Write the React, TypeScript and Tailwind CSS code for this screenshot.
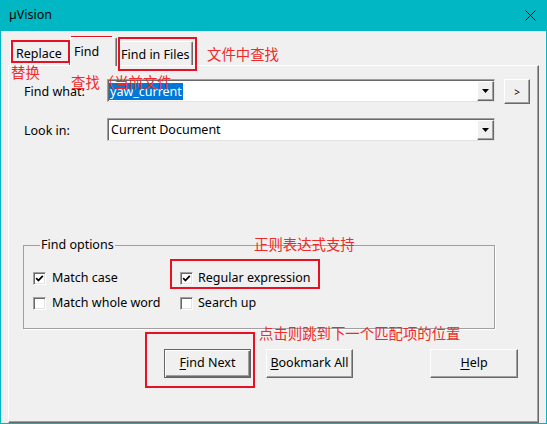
import React from "react";

function Check({ checked }: { checked?: boolean }) {
  return (
    <span className="w-[13px] h-[13px] shrink-0 bg-white border border-t-[#a0a0a0] border-l-[#a0a0a0] border-r-white border-b-white shadow-[inset_1px_1px_0_#696969,inset_-1px_-1px_0_#e3e3e3] flex items-center justify-center">
      {checked && (
        <svg width="9" height="9" viewBox="0 0 9 9">
          <path d="M1.2 4.2 L3.4 6.5 L7.8 1.8" stroke="#000" strokeWidth="1.8" fill="none" />
        </svg>
      )}
    </span>
  );
}

function Combo({ children }: { children: React.ReactNode }) {
  return (
    <div className="w-[388px] h-[23px] bg-white border border-t-[#a0a0a0] border-l-[#a0a0a0] border-r-[#e3e3e3] border-b-[#e3e3e3] shadow-[inset_1px_1px_0_#696969] flex items-stretch">
      <div className="flex-1 flex items-center pl-[2px] pt-px">{children}</div>
      <div className="w-[17px] mt-px bg-[#f0f0f0] border-t border-l border-t-white border-l-white border-r border-b border-r-[#696969] border-b-[#696969] shadow-[inset_-1px_-1px_0_#a0a0a0] flex items-center justify-center">
        <svg width="7" height="4" viewBox="0 0 7 4">
          <path d="M0 0 H7 L3.5 4 Z" fill="#000" />
        </svg>
      </div>
    </div>
  );
}

function Btn({ children, def }: { children: React.ReactNode; def?: boolean }) {
  return (
    <div
      className={
        "h-[29px] flex items-center justify-center bg-[#f0f0f0] " +
        (def
          ? "border border-[#646464] shadow-[inset_1px_1px_0_#ffffff,inset_-1px_-1px_0_#696969,inset_-2px_-2px_0_#a0a0a0]"
          : "border border-t-white border-l-white border-r-[#696969] border-b-[#696969] shadow-[inset_-1px_-1px_0_#a0a0a0]")
      }
    >
      <span className="text-[12.5px] leading-none">{children}</span>
    </div>
  );
}

export default function App() {
  return (
    <div className="relative w-[547px] h-[424px] bg-[#00b7c3] flex flex-col px-px pb-px font-['Noto_Sans',sans-serif] text-[12.5px] text-black overflow-hidden">
      {/* Title bar */}
      <div className="h-[31px] shrink-0 flex items-center justify-between pl-[8px] pr-[10px]">
        <span className="leading-none text-[12.5px]">µVision</span>
        <svg width="11" height="11" viewBox="0 0 11 11">
          <path d="M0.5 0.5 L10.5 10.5 M10.5 0.5 L0.5 10.5" stroke="#000" strokeWidth="1" />
        </svg>
      </div>

      {/* Client */}
      <div className="flex-1 bg-[#f0f0f0] flex flex-col pl-[7px] pr-[7px]">
        {/* Tabs */}
        <div className="h-[34px] shrink-0 flex items-end pl-[2px]">
          <div className="w-[60px] h-[24px] border-t border-l border-t-white border-l-white border-r border-r-[#696969] rounded-t-[2px] pl-[5px] pt-[4px] leading-[16px]">
            Replace
          </div>
          <div className="relative z-10 -mb-px w-[47px] h-[29px] bg-[#f0f0f0] border-t border-l border-t-white border-l-white border-r border-r-[#696969] shadow-[inset_-1px_0_0_#a0a0a0] rounded-t-[2px] pl-[3px] pt-[6px] leading-[16px]">
            Find
          </div>
          <div className="w-[76px] h-[24px] border-t border-t-white border-r border-r-[#696969] shadow-[inset_-1px_0_0_#a0a0a0] rounded-t-[2px] pl-[4px] pt-[5px] leading-[16px]">
            Find in Files
          </div>
        </div>

        {/* Panel */}
        <div className="flex-1 border-t border-l border-t-white border-l-white border-r border-b border-r-[#696969] border-b-[#696969] shadow-[inset_-1px_-1px_0_#a0a0a0] flex flex-col pl-[15px]">
          {/* Find what */}
          <div className="mt-[13px] flex items-start">
            <div className="w-[83px] h-[23px] flex items-center pt-[3px]">Find what:</div>
            <Combo>
              <span className="bg-[#0078d7] text-white h-[17px] leading-[17px] pl-px pr-[1px] -ml-px">yaw_current</span>
            </Combo>
            <div className="ml-[9px] w-[26px] h-[25px] bg-[#f0f0f0] border border-t-white border-l-white border-r-[#696969] border-b-[#696969] shadow-[inset_-1px_-1px_0_#a0a0a0] flex items-center justify-center">
              <span className="text-[10px] leading-none">&gt;</span>
            </div>
          </div>

          {/* Look in */}
          <div className="mt-[14px] flex items-start">
            <div className="w-[83px] h-[23px] flex items-center pt-[4px]">Look in:</div>
            <Combo>
              <span className="pl-px">Current Document</span>
            </Combo>
          </div>

          {/* Find options */}
          <fieldset className="mt-[96px] -ml-px w-[472px] border border-[#a0a0a0] shadow-[1px_1px_0_#ffffff] pb-[17px] pl-[9px]">
            <legend className="ml-[7px] px-px leading-[16px]">Find options</legend>
            <div className="mt-[17px] h-[16px] flex items-center">
              <div className="w-[147px] flex items-center gap-[6px]">
                <Check checked />
                <span>Match case</span>
              </div>
              <div className="flex items-center gap-[5px]">
                <Check checked />
                <span>Regular expression</span>
              </div>
            </div>
            <div className="mt-[9px] h-[16px] flex items-center">
              <div className="w-[147px] flex items-center gap-[6px]">
                <Check />
                <span>Match whole word</span>
              </div>
              <div className="flex items-center gap-[5px]">
                <Check />
                <span>Search up</span>
              </div>
            </div>
          </fieldset>

          {/* Buttons */}
          <div className="mt-[20px] ml-[140px] flex items-start">
            <div className="w-[87px]">
              <Btn def>
                <span className="underline underline-offset-2">F</span>ind Next
              </Btn>
            </div>
            <div className="w-[87px] ml-[15px]">
              <Btn>
                <span className="underline underline-offset-2">B</span>ookmark All
              </Btn>
            </div>
            <div className="w-[88px] ml-[77px]">
              <Btn>
                <span className="underline underline-offset-2">H</span>elp
              </Btn>
            </div>
          </div>
        </div>
      </div>

      {/* Annotations (overlay) */}
      <div className="absolute left-[11px] top-[40px] w-[59px] h-[23px] border-2 border-[#e81123] pointer-events-none" />
      <div className="absolute left-[71px] top-[36px] w-[41px] h-[30px] border-2 border-[#e81123] pointer-events-none" />
      <div className="absolute left-[118px] top-[37px] w-[79px] h-[34px] border-2 border-[#e81123] pointer-events-none" />
      <div className="absolute left-[170px] top-[259px] w-[150px] h-[30px] border-2 border-[#e81123] pointer-events-none" />
      <div className="absolute left-[145px] top-[332px] w-[110px] h-[56px] border-2 border-[#e81123] pointer-events-none" />

      <div className="absolute left-[11px] top-[65px] text-[14.4px] leading-none text-[#ee2a2a] font-['Noto_Sans_CJK_SC',sans-serif] whitespace-nowrap">替换</div>
      <div className="absolute left-[71px] top-[75px] text-[14.4px] leading-none text-[#ee2a2a] font-['Noto_Sans_CJK_SC',sans-serif] whitespace-nowrap">查找（当前文件</div>
      <div className="absolute left-[207px] top-[47px] text-[14.4px] leading-none text-[#ee2a2a] font-['Noto_Sans_CJK_SC',sans-serif] whitespace-nowrap">文件中查找</div>
      <div className="absolute left-[254px] top-[237px] text-[14.4px] leading-none text-[#ee2a2a] font-['Noto_Sans_CJK_SC',sans-serif] whitespace-nowrap">正则表达式支持</div>
      <div className="absolute left-[259px] top-[326px] text-[14.4px] leading-none text-[#ee2a2a] font-['Noto_Sans_CJK_SC',sans-serif] whitespace-nowrap">点击则跳到下一个匹配项的位置</div>
    </div>
  );
}
